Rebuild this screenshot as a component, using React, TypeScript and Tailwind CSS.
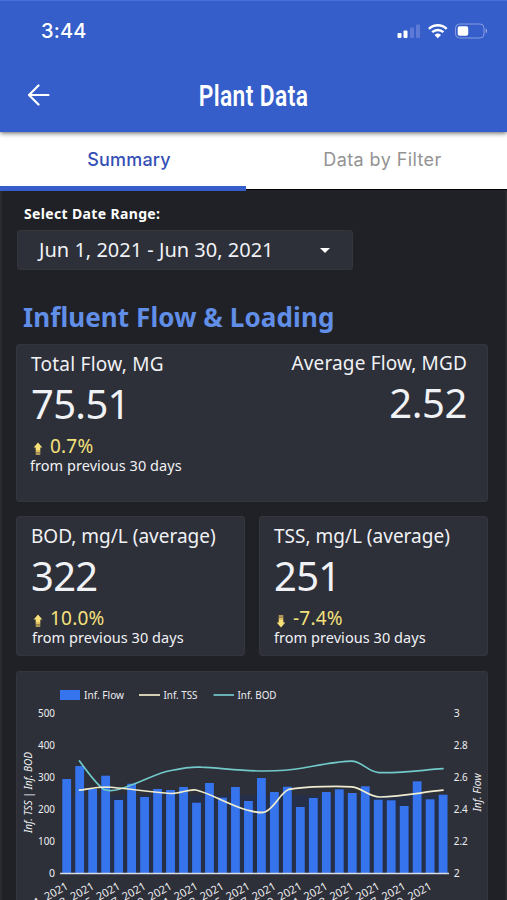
import type { ReactNode } from 'react';

const flow = [
  779, 766, 789, 775.7, 800, 783.7, 797, 789, 790, 787, 802.7, 783, 797.7, 787, 801, 778, 792, 786.7, 807, 798, 792,
  789.3, 793, 786.3, 799.7, 800.3, 806, 781.3, 799.3, 794.7,
];

const dateLabels = Array.from({ length: 15 }, (_, i) => `Jun ${i * 2 + 1}, 2021`);

function StatusIcons() {
  return (
    <svg width="92" height="20" viewBox="397 21 92 20" fill="none">
      <rect x="397.5" y="33" width="4" height="5" rx="1" fill="#fff" />
      <rect x="403.5" y="30.5" width="4" height="7.5" rx="1" fill="#fff" />
      <rect x="410" y="27.5" width="4" height="10.5" rx="1" fill="#5c7ad6" />
      <rect x="416" y="24.5" width="4" height="13.5" rx="1" fill="#5c7ad6" />
      <path d="M428.9 28.9a12.9 12.9 0 0 1 17.8 0" stroke="#fff" strokeWidth="2.5" />
      <path d="M432.2 32.2a8.2 8.2 0 0 1 11.2 0" stroke="#fff" strokeWidth="2.4" />
      <path d="M434.6 35a4.7 4.7 0 0 1 6.4 0l-3.2 3.2z" fill="#fff" />
      <rect x="455.5" y="24" width="28.5" height="14" rx="4" stroke="#879be2" />
      <rect x="457.7" y="26.2" width="10.5" height="9.6" rx="1.8" fill="#fff" />
      <path d="M485.7 28.6c1.8.7 1.8 4 0 4.8z" fill="#9aaae6" />
    </svg>
  );
}

function TrendArrow({ down = false }: { down?: boolean }) {
  return (
    <svg width="10" height="14" viewBox="0 0 10 14" className={down ? 'rotate-180' : ''}>
      <path d="M5 .5 9.3 5.6H7.3V8H2.700V5.6H.7z" fill="#f8e178" />
      <path d="M2.700 8h4.600v2.500H2.700z" fill="#dfc061" />
      <path d="M2.700 10.500h4.600V13H2.700z" fill="#b3975a" />
    </svg>
  );
}

interface StatCardProps {
  title: string;
  value: string;
  change: string;
  down?: boolean;
  titleClass?: string;
  noteClass?: string;
  className: string;
  children?: ReactNode;
}

function StatCard({ title, value, change, down, titleClass = '', noteClass = '', className, children }: StatCardProps) {
  return (
    <div className={`flex justify-between rounded-[3px] border border-[#35363b] bg-[#2d2f39] ${className}`}>
      <div className="whitespace-nowrap text-[#f1f2f5]">
        <div className={`mt-[6px] text-[19px] leading-[27px] ${titleClass}`}>{title}</div>
        <div className="text-[40px] leading-[52px] tracking-[-0.7px]">{value}</div>
        <div className="mt-1 flex h-[25px] items-center text-[19px] tracking-[0.2px] text-[#f4e17c]">
          <span className="mt-1 ml-[2px] mr-[7px] flex">
            <TrendArrow down={down} />
          </span>
          {change}
        </div>
        <div className={`-mt-1 text-[14.5px] leading-[20px] tracking-[0.05px] ${noteClass}`}>from previous 30 days</div>
      </div>
      {children}
    </div>
  );
}

function FlowChart() {
  return (
    <svg
      width="470"
      height="228"
      viewBox="17 672 470 228"
      className="block font-['Noto_Sans',sans-serif]"
      fill="#eeeff2"
      fontSize="10.5"
    >
      {/* Legend */}
      <rect x="60" y="690" width="20" height="10" fill="#3674ed" />
      <text x="84" y="698.6" textLength="40" lengthAdjust="spacingAndGlyphs">Inf. Flow</text>
      <path d="M139 695h21" stroke="#d3cdb4" strokeWidth="2" />
      <text x="163.5" y="698.6" textLength="34" lengthAdjust="spacingAndGlyphs">Inf. TSS</text>
      <path d="M213.500 695h20.500" stroke="#68b2b6" strokeWidth="2" />
      <text x="237.500" y="698.6" textLength="39" lengthAdjust="spacingAndGlyphs">Inf. BOD</text>

      {/* Axes */}
      {[500, 400, 300, 200, 100, 0].map((n, i) => (
        <text key={n} x="55" y={717.3 + i * 32} textAnchor="end" textLength={n ? 17 : 6} lengthAdjust="spacingAndGlyphs">
          {n}
        </text>
      ))}
      {['3', '2.8', '2.6', '2.4', '2.2', '2'].map((n, i) => (
        <text key={n} x="453.800" y={717.3 + i * 32} textLength={n.length > 1 ? 14 : 6} lengthAdjust="spacingAndGlyphs">
          {n}
        </text>
      ))}
      <text transform="translate(31.500 833) rotate(-90)" fontStyle="italic" textLength="81" lengthAdjust="spacingAndGlyphs">Inf. TSS | Inf. BOD</text>
      <text transform="translate(481 811.500) rotate(-90)" fontStyle="italic" textLength="38" lengthAdjust="spacingAndGlyphs">Inf. Flow</text>

      {/* Bars */}
      <rect x="62" y="795" width="385" height="78" fill="#1d3158" opacity=".45" />
      {flow.map((y, i) => (
        <rect key={i} x={62.3 + i * 12.98} y={y} width="8.800" height={873 - y} fill="#3674ed" />
      ))}
      <path d="M60 873.500h389" stroke="#d8dce5" strokeWidth="1.500" />

      {/* Trend lines */}
      <g fill="none" strokeWidth="1.700" strokeLinecap="round">
        <path
          d="M79.500 761C86 770 97 785 104 789.500C112 792.500 122 789 130 785.500C146 780 157 773 171 770.500C183 768 191 766.500 201 767.200C220 768 242 771 264 771C284 771 292 770 303 768C319 765 340 761 352 761.200C363 762 368 772 379 772.600C400 773.500 423 770 443 768.700"
          stroke="#72c9c9"
        />
        <path
          d="M79.500 790.200C88 789 96 787 106 787C121 787.600 149 792 171 793.500C181 793.500 188 789 196 790C210 793 229 805 247 810C255 812 261 814 266 811.500C276 806 280 793 289 789.300C307 786 341 786.300 352 786.800C363 788 368 797 380 797C403 796.500 423 792 443 790.200"
          stroke="#f0eccf"
        />
      </g>

      {dateLabels.map((label, i) => (
        <text key={label} transform={`translate(${69 + i * 25.96} 888.500) rotate(-29)`} fontSize="11" textAnchor="end">
          {label}
        </text>
      ))}
    </svg>
  );
}

export default function App() {
  return (
    <div className="flex h-[900px] w-[507px] flex-col overflow-hidden bg-[#202126] font-['Noto_Sans',sans-serif]">
      <header className="relative z-10 h-[131.500px] shrink-0 border-t border-[#496fd8] bg-[#355ecb] text-white shadow-[0_1px_5px_rgba(0,0,0,0.65)]">
        <div className="flex h-[59px] items-center justify-between pr-[18px] pl-[41px]">
          <span className="text-[20px] font-medium tracking-[0.2px] font-['Inter',sans-serif]">3:44</span>
          <StatusIcons />
        </div>
        <div className="grid h-[70px] grid-cols-[80px_1fr_80px] items-center">
          <svg width="23" height="22" viewBox="0 0 23 22" className="ml-[27px]" fill="none" stroke="#fff" strokeWidth="2.200" strokeLinecap="round" strokeLinejoin="round">
            <path d="M21.500 11H2M11.500 1.500 2 11l9.500 9.500" />
          </svg>
          <h1 className="mt-[1px] scale-x-[0.76] text-center text-[30px] leading-[40px] font-semibold tracking-[0.5px] whitespace-nowrap font-['Roboto',sans-serif]">Plant Data</h1>
        </div>
      </header>

      <nav className="grid h-[59.500px] shrink-0 grid-cols-[246px_261px] text-center text-[18px] leading-[24px] font-['Inter',sans-serif]">
        <div className="border-b-[5px] border-[#355ecb] bg-white pt-4 pl-3 font-medium tracking-[0.2px] text-[#354fb6]">Summary</div>
        <div className="h-[58px] border-b border-black bg-white pt-4 pl-3 tracking-[0.4px] text-[#939393]">Data by Filter</div>
      </nav>

      <main className="flex-1 border-x-2 border-[#292b2f] pr-[17px] pl-[14px]">
        <div className="pt-[13px] pl-[8px] text-[14px] leading-[20px] font-bold tracking-[0.35px] text-white">Select Date Range:</div>
        <button className="mt-[6px] ml-px flex h-[40px] w-[336px] items-center justify-between rounded-[3px] border border-[#35363b] bg-[#2d2f39] pr-[22px] pl-[21px] text-[20px] text-[#f1f2f5]">
          <span>Jun 1, 2021 - Jun 30, 2021</span>
          <svg width="10" height="5" viewBox="0 0 10 5" fill="#fff">
            <path d="M0 0h10L5 5z" />
          </svg>
        </button>
        <h2 className="mt-[28px] pl-[7px] text-[26px] leading-[38px] font-bold tracking-[0.1px] text-[#618ee7]">Influent Flow &amp; Loading</h2>

        <StatCard title="Total Flow, MG" value="75.51" change="0.7%" titleClass="tracking-[0.25px]" noteClass="-ml-px" className="mt-[8px] h-[158px] pl-[14px] pr-5">
          <div className="text-right whitespace-nowrap text-[#f1f2f5]">
            <div className="mt-[5px] text-[19px] leading-[27px] tracking-[0.15px]">Average Flow, MGD</div>
            <div className="text-[40px] leading-[52px] tracking-[-0.4px]">2.52</div>
          </div>
        </StatCard>
        <div className="mt-[14px] grid grid-cols-2 gap-[14px]">
          <StatCard title="BOD, mg/L (average)" value="322" change="10.0%" noteClass="ml-px" className="h-[140px] pl-[14px]" />
          <StatCard title="TSS, mg/L (average)" value="251" change="-7.4%" down className="h-[140px] pl-[14px]" />
        </div>
        <div className="mt-[15px] h-[240px] rounded-t-[3px] border border-[#35363b] bg-[#2d2f39]">
          <FlowChart />
        </div>
      </main>
    </div>
  );
}
